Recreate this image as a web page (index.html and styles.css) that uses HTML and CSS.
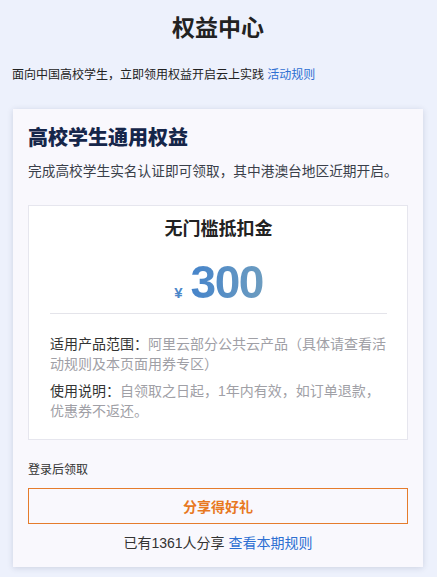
FILE: index.html
```html
<!DOCTYPE html>
<html lang="zh-CN">
<head>
<meta charset="utf-8">
<title>权益中心</title>
<link rel="stylesheet" href="styles.css">
</head>
<body>
<div class="page">
  <h1 class="page-title">权益中心</h1>
  <p class="intro">面向中国高校学生，立即领用权益开启云上实践 <a class="link">活动规则</a></p>
  <section class="card">
    <h2 class="card-title">高校学生通用权益</h2>
    <p class="card-desc">完成高校学生实名认证即可领取，其中港澳台地区近期开启。</p>
    <div class="coupon">
      <div class="coupon-name">无门槛抵扣金</div>
      <div class="amount"><span class="yen">¥</span><span class="num">300</span></div>
      <div class="divider"></div>
      <p class="info"><span class="label">适用产品范围：</span>阿里云部分公共云产品（具体请查看活动规则及本页面用券专区）</p>
      <p class="info"><span class="label">使用说明：</span>自领取之日起，1年内有效，如订单退款，优惠券不返还。</p>
    </div>
    <div class="login-tip">登录后领取</div>
    <button class="share-btn">分享得好礼</button>
    <p class="share-count">已有1361人分享 <a class="link">查看本期规则</a></p>
  </section>
</div>
</body>
</html>
```
FILE: styles.css
```css
html, body {
  margin: 0;
  padding: 0;
  background: #edf1fc;
}
body {
  font-family: "Liberation Sans", "Noto Sans CJK SC", sans-serif;
  color: #333;
}
.page {
  padding: 12px 14px 10px 13px;
}
.page-title {
  margin: 0;
  text-align: center;
  font-size: 23px;
  line-height: 32px;
  font-weight: 700;
  color: #222;
}
.intro {
  margin: 22px 0 0 -1px;
  font-size: 12px;
  line-height: 18px;
  color: #222;
}
.link {
  color: #2d6fd2;
  text-decoration: none;
}
.card {
  margin-top: 25px;
  width: 410px;
  box-sizing: border-box;
  background: #f9f8fd;
  box-shadow: 0 1px 6px rgba(40, 50, 90, 0.16);
  padding: 15px 15px 14px;
}
.card-title {
  margin: 0;
  font-size: 20px;
  line-height: 28px;
  font-weight: 900;
  color: #16264a;
}
.card-desc {
  margin: 10px 0 0;
  font-size: 13.7px;
  line-height: 20px;
  color: #3a3f4a;
  white-space: nowrap;
}
.coupon {
  margin-top: 23px;
  background: #fff;
  border: 1px solid #e6e6ee;
  padding: 11px 20px 18px 21px;
}
.coupon-name {
  text-align: center;
  font-size: 18px;
  line-height: 24px;
  font-weight: 700;
  color: #222;
}
.amount {
  margin-top: 18px;
  display: flex;
  justify-content: center;
  align-items: baseline;
  gap: 8px;
  line-height: 46px;
  height: 46px;
}
.yen {
  font-size: 15px;
  font-weight: 700;
  color: #4b87c9;
}
.num {
  font-size: 46px;
  font-weight: 700;
  letter-spacing: -1.5px;
  background: linear-gradient(90deg, #4684ca, #6c9cc0);
  -webkit-background-clip: text;
  background-clip: text;
  color: transparent;
}
.divider {
  margin-top: 8px;
  height: 1px;
  background: #e4e4ea;
}
.info {
  margin: 0;
  font-size: 14px;
  line-height: 20px;
  color: #a0a0a6;
}
.divider + .info {
  margin-top: 20px;
}
.info + .info {
  margin-top: 7px;
}
.label {
  color: #333;
}
.login-tip {
  margin-top: 21px;
  font-size: 12px;
  line-height: 18px;
  color: #333;
}
.share-btn {
  display: block;
  margin-top: 9px;
  width: 100%;
  height: 36px;
  box-sizing: border-box;
  background: transparent;
  border: 1px solid #e57c2c;
  color: #e8781f;
  font-family: inherit;
  font-size: 14px;
  font-weight: 700;
  padding: 0;
  cursor: pointer;
}
.share-count {
  margin: 9px 0 0;
  text-align: center;
  font-size: 14px;
  line-height: 20px;
  color: #333;
}
```
